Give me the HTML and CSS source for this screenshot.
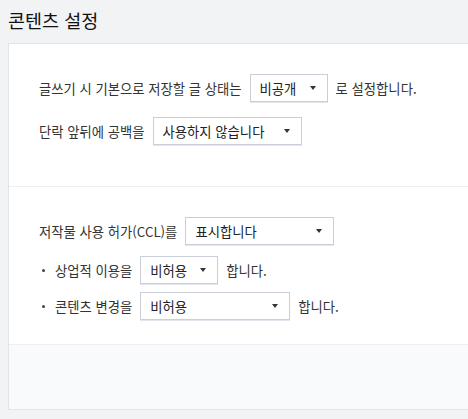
FILE: index.html
```html
<!DOCTYPE html>
<html lang="ko">
<head>
<meta charset="utf-8">
<link rel="stylesheet" href="styles.css">
</head>
<body>
<div class="page">
  <h1 class="title">콘텐츠 설정</h1>
  <div class="card">
    <div class="section s1">
      <div class="row r1">
        <span>글쓰기 시 기본으로 저장할 글 상태는</span>
        <div class="select w78"><span>비공개</span><i class="arrow"></i></div>
        <span>로 설정합니다.</span>
      </div>
      <div class="row r2">
        <span>단락 앞뒤에 공백을</span>
        <div class="select w149"><span>사용하지 않습니다</span><i class="arrow"></i></div>
      </div>
    </div>
    <div class="section s2">
      <div class="row r3">
        <span>저작물 사용 허가(CCL)를</span>
        <div class="select w149"><span>표시합니다</span><i class="arrow"></i></div>
      </div>
      <div class="row bullet r4">
        <i class="dot"></i>
        <span>상업적 이용을</span>
        <div class="select w78"><span>비허용</span><i class="arrow"></i></div>
        <span>합니다.</span>
      </div>
      <div class="row bullet r5">
        <i class="dot"></i>
        <span>콘텐츠 변경을</span>
        <div class="select w150"><span>비허용</span><i class="arrow"></i></div>
        <span>합니다.</span>
      </div>
    </div>
    <div class="footer"></div>
  </div>
</div>
</body>
</html>
```
FILE: styles.css
```css
html, body {
  margin: 0;
  padding: 0;
  background: #f2f3f5;
  overflow: hidden;
}
body {
  font-family: "Noto Sans CJK KR", "Noto Sans", sans-serif;
  color: #333;
  font-size: 13.33px;
}
.page {
  width: 468px;
  height: 419px;
  overflow: hidden;
}
.title {
  margin: 0;
  padding: 8px 0 0 8px;
  height: 43px;
  box-sizing: border-box;
  font-size: 18.5px;
  line-height: 24px;
  font-weight: 400;
  color: #111;
}
.card {
  margin-left: 8px;
  width: 500px;
  background: #fff;
  border: 1px solid #e1e4ea;
}
.section {
  padding-left: 30px;
}
.s1 {
  padding-top: 30px;
  padding-bottom: 41px;
  border-bottom: 1px solid #eceef2;
}
.s2 {
  padding-top: 30px;
  padding-bottom: 24px;
  border-bottom: 1px solid #eceef2;
}
.footer {
  height: 64px;
  background: #f9fafb;
}
.row {
  display: flex;
  align-items: center;
  gap: 8px;
  height: 28px;
}
.r2 { margin-top: 15px; }
.r4 { margin-top: 11px; }
.r5 { margin-top: 8px; }
.dot {
  width: 3px;
  height: 3px;
  border-radius: 50%;
  background: #444;
  margin-left: 3px;
  margin-right: 2px;
}
.select {
  box-sizing: border-box;
  height: 28px;
  border: 1px solid #c9ced8;
  box-shadow: 0 1px 0 #e3e6ec;
  display: flex;
  align-items: center;
  justify-content: space-between;
  padding: 0 11px 0 9px;
  background: #fff;
  color: #222;
}
.w78 { width: 78px; }
.w149 { width: 149px; }
.w150 { width: 150px; }
.arrow {
  width: 0;
  height: 0;
  border-left: 3.5px solid transparent;
  border-right: 3.5px solid transparent;
  border-top: 4px solid #333;
}
```
